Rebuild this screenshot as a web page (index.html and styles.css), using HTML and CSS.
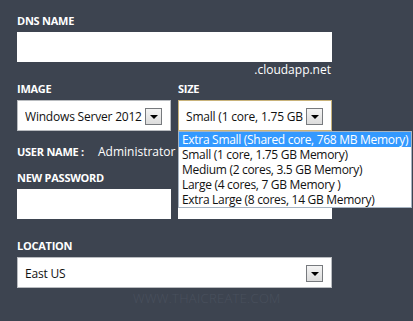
FILE: index.html
```html
<!DOCTYPE html>
<html>
<head>
<meta charset="utf-8">
<link rel="stylesheet" href="styles.css">
</head>
<body>
<div class="form">
  <div class="label">DNS NAME</div>
  <div class="input wide"></div>
  <div class="suffix">.cloudapp.net</div>

  <div class="row first">
    <div class="col">
      <div class="label">IMAGE</div>
      <div class="select">
        <span class="value">Windows Server 2012 Datacenter</span>
        <span class="btn"><span class="arrow"></span></span>
      </div>
    </div>
    <div class="col size-col">
      <div class="label">SIZE</div>
      <div class="select focused">
        <span class="value">Small (1 core, 1.75 GB Memory)</span>
        <span class="btn"><span class="arrow"></span></span>
      </div>
      <ul class="menu">
        <li class="item active">Extra Small (Shared core, 768 MB Memory)</li>
        <li class="item">Small (1 core, 1.75 GB Memory)</li>
        <li class="item">Medium (2 cores, 3.5 GB Memory)</li>
        <li class="item">Large (4 cores, 7 GB Memory )</li>
        <li class="item">Extra Large (8 cores, 14 GB Memory)</li>
      </ul>
    </div>
  </div>

  <div class="user">
    <span class="label inline">USER NAME :</span>
    <span class="user-value">Administrator</span>
  </div>

  <div class="row pass">
    <div class="col">
      <div class="label">NEW PASSWORD</div>
      <div class="input"></div>
    </div>
    <div class="col">
      <div class="spacer"></div>
      <div class="input"></div>
    </div>
  </div>

  <div class="label loc">LOCATION</div>
  <div class="select wide">
    <span class="value">East US</span>
    <span class="btn"><span class="arrow"></span></span>
  </div>

  <div class="watermark">WWW.THAICREATE.COM</div>
</div>
</body>
</html>
```

FILE: styles.css
```css
html, body {
  margin: 0;
  padding: 0;
  background: #3d4450;
}
body {
  font-family: "Open Sans", "DejaVu Sans", sans-serif;
  color: #ffffff;
}
.form {
  padding: 14px 0 0 17px;
  width: 315px;
}
.label {
  font-weight: 700;
  font-size: 11px;
  line-height: 14px;
  margin-bottom: 4px;
  color: #ffffff;
  letter-spacing: -0.25px;
}
.label.inline {
  margin: 0;
}
.spacer {
  height: 18px;
}
.input {
  background: #ffffff;
  height: 30px;
  width: 154px;
}
.input.wide, .select.wide {
  width: 315px;
}
.suffix {
  text-align: right;
  font-size: 12px;
  line-height: 16px;
  padding-right: 1px;
  margin-bottom: 4px;
}
.row {
  display: flex;
  gap: 7px;
}
.col {
  width: 154px;
  position: relative;
}
.select {
  box-sizing: border-box;
  height: 31px;
  width: 154px;
  background: #ffffff;
  border: 1px solid #b9bcc0;
  display: flex;
  align-items: center;
  padding: 1px 8px 0 7px;
  gap: 3px;
  color: #111111;
  font-size: 12px;
}
.select.focused {
  border-color: #c9b37a;
}
.value {
  flex: 1;
  overflow: hidden;
  white-space: nowrap;
  letter-spacing: -0.2px;
}
.btn {
  box-sizing: border-box;
  width: 17px;
  height: 17px;
  flex: none;
  border: 1px solid #777a7e;
  background: linear-gradient(#f4f4f4, #dcdcdc);
  display: flex;
  align-items: center;
  justify-content: center;
}
.arrow {
  width: 0;
  height: 0;
  border-left: 4px solid transparent;
  border-right: 4px solid transparent;
  border-top: 4px solid #000000;
  margin-top: 1px;
}
.menu {
  position: absolute;
  top: 49px;
  left: 0;
  margin: 0;
  padding: 0;
  list-style: none;
  width: 234px;
  box-sizing: border-box;
  border: 1px solid #a7b4c2;
  background: #ffffff;
  z-index: 2;
}
.item {
  font-size: 12px;
  line-height: 15px;
  height: 15px;
  padding-left: 3px;
  color: #111111;
  white-space: nowrap;
  letter-spacing: -0.3px;
}
.item.active {
  background: #3399ff;
  color: #ffffff;
}
.user {
  margin-top: 14px;
  display: flex;
  align-items: baseline;
  height: 14px;
  line-height: 14px;
}
.user-value {
  margin-left: 14px;
  font-size: 12px;
}
.pass {
  margin-top: 12px;
}
.loc {
  margin-top: 20px;
}
.watermark {
  margin-top: 1px;
  padding-left: 116px;
  font-size: 13px;
  font-weight: 300;
  color: #49505d;
  letter-spacing: 0.3px;
}
```
